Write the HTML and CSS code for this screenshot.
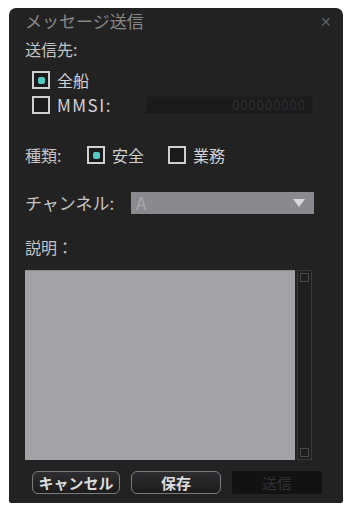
FILE: index.html
```html
<html>
<head>
<meta charset="utf-8" />
<link rel="stylesheet" href="styles.css">
</head>

<body>
    <div class="dialog">
        <div class="title-bar">
            <span class="title">メッセージ送信</span>
            <span class="close">&#x2715;</span>
        </div>

        <div class="row label">送信先:</div>

        <div class="row check-row first">
            <span class="box checked"><span class="dot"></span></span>
            <span class="check-label">全船</span>
        </div>
        <div class="row check-row">
            <span class="box"></span>
            <span class="check-label mmsi">MMSI:</span>
            <span class="mmsi-input">000000000</span>
        </div>

        <div class="row kind-row">
            <span class="label">種類:</span>
            <span class="box checked"><span class="dot"></span></span>
            <span class="check-label">安全</span>
            <span class="box second"></span>
            <span class="check-label">業務</span>
        </div>

        <div class="row channel-row">
            <span class="label">チャンネル:</span>
            <div class="select">
                <span class="select-value">A</span>
                <svg class="arrow" width="14" height="10" viewBox="0 0 14 10">
                    <polygon points="1,1 13,1 7,9" fill="#d8d8dc" />
                </svg>
            </div>
        </div>

        <div class="row label desc">説明：</div>

        <div class="memo">
            <div class="memo-text"></div>
            <div class="scrollbar">
                <span class="scroll-btn"></span>
                <span class="scroll-btn"></span>
            </div>
        </div>

        <div class="buttons">
            <button class="btn cancel">キャンセル</button>
            <button class="btn">保存</button>
            <button class="btn disabled">送信</button>
        </div>
    </div>
</body>
</html>
```

FILE: styles.css
```css
body {
    margin: 0px;
    background: #fff;
    font-family: "Noto Sans CJK JP", "Noto Sans", sans-serif;
}

.dialog {
    margin: 8px 0px 0px 9px;
    width: 334px;
    height: 495px;
    box-sizing: border-box;
    background: #222223;
    border-radius: 7px 7px 2px 2px;
    padding: 0px 0px 0px 16px;
    display: flex;
    flex-direction: column;
    color: #c9c9cb;
    font-size: 16px;
}

.title-bar {
    height: 26px;
    display: flex;
    align-items: center;
    justify-content: space-between;
    padding-right: 11px;
}
.title {
    color: #88888a;
    font-size: 17px;
    line-height: 20px;
}
.close {
    color: #5e5e60;
    font-size: 14px;
}

.row {
    height: 20px;
    display: flex;
    align-items: center;
    line-height: 20px;
}
.label {
    margin-top: 5px;
    color: #c4c4c6;
}

.check-row {
    padding-left: 7px;
    margin-top: 5px;
}
.check-row.first {
    margin-top: 11px;
}

.box {
    width: 14px;
    height: 14px;
    border: 2px solid #d0d0d2;
    background: #1a1a1b;
    display: flex;
    align-items: center;
    justify-content: center;
    flex: none;
}
.dot {
    width: 7px;
    height: 7px;
    border-radius: 2px;
    background: #54c8c2;
}
.check-label {
    margin-left: 7px;
    color: #d2d2d4;
}
.mmsi {
    font-size: 17px;
    letter-spacing: 1.5px;
    width: 89px;
}
.mmsi-input {
    width: 167px;
    height: 18px;
    box-sizing: border-box;
    background: #1b1b1c;
    border: 1px solid #1f1f20;
    color: #2e2e30;
    font-size: 13px;
    line-height: 16px;
    text-align: right;
    padding-right: 6px;
    letter-spacing: 1px;
}

.kind-row {
    margin-top: 30px;
}
.kind-row .label {
    margin-top: 0px;
    width: 62px;
}
.kind-row .box.second {
    margin-left: 24px;
}

.channel-row {
    margin-top: 27px;
    height: 22px;
}
.channel-row .label {
    margin-top: 0px;
    width: 106px;
    font-size: 17px;
}
.select {
    width: 183px;
    height: 22px;
    background: #8a8a8e;
    display: flex;
    align-items: center;
    justify-content: space-between;
    padding: 0px 8px 0px 5px;
    box-sizing: border-box;
}
.select-value {
    color: #a8a8ac;
    font-size: 17px;
}

.desc {
    margin-top: 23px;
}

.memo {
    margin-top: 13px;
    height: 190px;
    display: flex;
}
.memo-text {
    width: 270px;
    background: #a3a3a7;
    border-top: 1px solid #8c8c90;
}
.scrollbar {
    width: 13px;
    margin-left: 2px;
    border: 1px solid #3a3a3c;
    background: #1e1e1f;
    display: flex;
    flex-direction: column;
    justify-content: space-between;
    align-items: center;
    padding: 2px 0px;
}
.scroll-btn {
    width: 9px;
    height: 9px;
    border: 1px solid #4a4a4c;
    box-sizing: border-box;
}

.buttons {
    margin-top: 11px;
    display: flex;
    gap: 11px;
    padding-left: 7px;
}
.btn {
    width: 90px;
    height: 23px;
    border-radius: 6px;
    border: 1px solid #7a7a7c;
    background: linear-gradient(#2e2e30, #1c1c1d);
    color: #dcdcde;
    font-family: "Noto Sans CJK JP", sans-serif;
    font-size: 15px;
    font-weight: bold;
    padding: 0px;
    line-height: 20px;
}
.btn.cancel {
    width: 88px;
}
.btn.disabled {
    border: none;
    border-radius: 2px;
    background: #121213;
    color: #303032;
    font-weight: normal;
}
```
